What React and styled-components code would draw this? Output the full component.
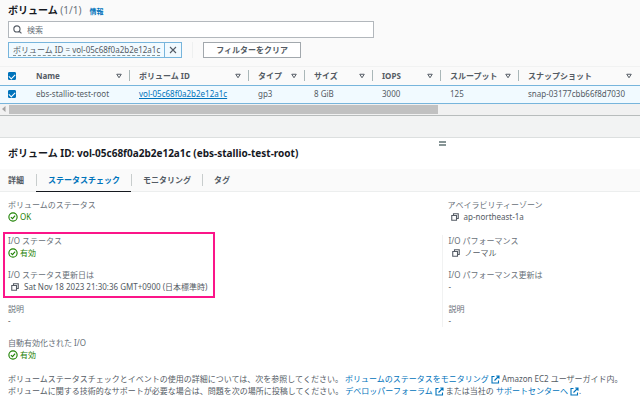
import { useState } from "react";
import styled, { createGlobalStyle } from "styled-components";

const columns = [
    { title: 'Name', width: 103 },
    { title: 'ボリューム ID', width: 119 },
    { title: 'タイプ', width: 56 },
    { title: 'サイズ', width: 68 },
    { title: 'IOPS', width: 68 },
    { title: 'スループット', width: 78 },
    { title: 'スナップショット' },
]

const tabs = ['詳細', 'ステータスチェック', 'モニタリング', 'タグ']

const CheckIcon = () => (
    <Icon $size={10} viewBox="0 0 16 16">
        <circle cx="8" cy="8" r="6.6" fill="none" stroke="#1d8102" strokeWidth="1.8" />
        <path d="M4.6 8.2 7.2 10.6 11.4 5.8" fill="none" stroke="#1d8102" strokeWidth="1.8" />
    </Icon>
)

const CopyIcon = () => (
    <Icon $size={8} viewBox="0 0 16 16">
        <path d="M1.5 5h9.5v9.5H1.5zM5 5V1.5h9.5V11H11" fill="none" stroke="#545b64" strokeWidth="2.2" />
    </Icon>
)

const ExternalIcon = () => (
    <Icon $size={9} viewBox="0 0 18 18">
        <path d="M7 3H2v13h13v-5M10.5 2H16v5.5M16 2 7 11" fill="none" stroke="#0073bb" strokeWidth="2.2" />
    </Icon>
)

const SortIcon = () => (
    <Icon $size={6} viewBox="0 0 12 12">
        <path d="M1.5 2.5h9L6 9.5z" fill="none" stroke="#545b64" strokeWidth="2" />
    </Icon>
)

const Status = ({ label, children }) => (
    <Item>
        <dt>{label}</dt>
        <Good><CheckIcon />{children}</Good>
    </Item>
)

const Copyable = ({ label, children }) => (
    <Item>
        <dt>{label}</dt>
        <Copy>
            <IconButton type="button" aria-label="コピー"><CopyIcon /></IconButton>
            {children}
        </Copy>
    </Item>
)

const Plain = ({ label }) => (
    <Item>
        <dt>{label}</dt>
        <dd>-</dd>
    </Item>
)

const App = () => {
    const [active, setActive] = useState(1)
    const [checked, setChecked] = useState(true)
    const toggle = () => setChecked(!checked)

    return (
        <Page>
            <GlobalStyle />

            <ListHeader>
                <Title>ボリューム <Counter>(1/1)</Counter><Info href="#info">情報</Info></Title>
                <SearchBox>
                    <Icon $size={9} viewBox="0 0 16 16">
                        <path d="M11 11l4 4M7 1.5a5.5 5.5 0 1 1 0 11 5.5 5.5 0 0 1 0-11z" fill="none" stroke="#545b64" strokeWidth="2" />
                    </Icon>
                    <SearchInput type="text" placeholder="検索" aria-label="検索" />
                </SearchBox>
                <Filters>
                    <Token>
                        <TokenText type="button"><span>ボリューム ID = vol-05c68f0a2b2e12a1c</span></TokenText>
                        <TokenClose type="button" aria-label="削除">
                            <Icon $size={8} viewBox="0 0 16 16">
                                <path d="M2 2l12 12M14 2 2 14" stroke="#545b64" strokeWidth="2.2" />
                            </Icon>
                        </TokenClose>
                    </Token>
                    <Divider />
                    <ClearButton type="button">フィルターをクリア</ClearButton>
                </Filters>
            </ListHeader>

            <Table>
                <colgroup>
                    <Col $w={27} />
                    {columns.map((c) => <Col key={c.title} $w={c.width} />)}
                </colgroup>
                <thead>
                    <tr>
                        <CheckHead><Checkbox type="checkbox" aria-label="すべて選択" checked={checked} onChange={toggle} /></CheckHead>
                        {columns.map((c, i) => (
                            <Th key={c.title}>
                                <HeadCell type="button" $last={i === columns.length - 1}>{c.title}<SortIcon /></HeadCell>
                            </Th>
                        ))}
                    </tr>
                </thead>
                <tbody>
                    <Row>
                        <CheckCell><Checkbox type="checkbox" aria-label="ebs-stallio-test-root" checked={checked} onChange={toggle} /></CheckCell>
                        <Td>ebs-stallio-test-root</Td>
                        <Td><VolumeLink href="#volume">vol-05c68f0a2b2e12a1c</VolumeLink></Td>
                        <Td>gp3</Td>
                        <Td>8 GiB</Td>
                        <Td>3000</Td>
                        <Td>125</Td>
                        <Td>snap-03177cbb66f8d7030</Td>
                    </Row>
                </tbody>
            </Table>
            <Scrollbar>
                <Icon $size={8} viewBox="0 0 8 8"><path d="M5.5 1v6L2 4z" fill="#a3a3a3" /></Icon>
                <Thumb />
            </Scrollbar>
            <Gutter />

            <Panel>
                <Resize><Handle type="button" aria-label="サイズ変更" /></Resize>
                <PanelTitle>ボリューム ID: vol-05c68f0a2b2e12a1c (ebs-stallio-test-root)</PanelTitle>
                <Tabs role="tablist">
                    {tabs.map((t, i) => (
                        <Tab key={t} type="button" role="tab" aria-selected={i === active} $active={i === active} onClick={() => setActive(i)}>
                            <span>{t}</span>
                        </Tab>
                    ))}
                </Tabs>

                <Body>
                    <Columns $gap={12}>
                        <Column><Status label="ボリュームのステータス">OK</Status></Column>
                        <Column $right><Copyable label="アベイラビリティーゾーン">ap-northeast-1a</Copyable></Column>
                    </Columns>
                    <Columns $gap={10}>
                        <Column>
                            <Marked>
                                <Status label="I/O ステータス">有効</Status>
                                <Copyable label="I/O ステータス更新日は">Sat Nov 18 2023 21:30:36 GMT+0900 (日本標準時)</Copyable>
                            </Marked>
                            <Plain label="説明" />
                        </Column>
                        <Column $right $line>
                            <Copyable label="I/O パフォーマンス">ノーマル</Copyable>
                            <Plain label="I/O パフォーマンス更新は" />
                            <Plain label="説明" />
                        </Column>
                    </Columns>
                    <Column><Status label="自動有効化された I/O">有効</Status></Column>
                    <Notes>
                        <p>ボリュームステータスチェックとイベントの使用の詳細については、次を参照してください。 <Link href="#monitor">ボリュームのステータスをモニタリング <ExternalIcon /></Link> Amazon EC2 ユーザーガイド内。</p>
                        <p>ボリュームに関する技術的なサポートが必要な場合は、問題を次の場所に投稿してください。 <Link href="#forum">デベロッパーフォーラム <ExternalIcon /></Link> または当社の <Link href="#support">サポートセンターへ <ExternalIcon /></Link>.</p>
                    </Notes>
                </Body>
            </Panel>
        </Page>
    );
};

export default App;

const GlobalStyle = createGlobalStyle`
  * { box-sizing: border-box; }
  body {
    margin: 0;
    background: #fff;
    color: #545b64;
    font: 8px/12px "Noto Sans", "Noto Sans CJK JP", sans-serif;
  }
  h1, h2, p, dl, dd { margin: 0; }
  button, input { font: inherit; color: inherit; }
  button { padding: 0; border: 0; background: none; }
`;

const Page = styled.main`
  overflow: hidden;
`;

const Icon = styled.svg`
  flex: none;
  width: ${(p) => p.$size}px;
  height: ${(p) => p.$size}px;
  vertical-align: middle;
`;

const ListHeader = styled.header`
  padding: 2px 8px 8px;
  background: #fafafa;
  border-bottom: 1px solid #f1f2f2;
`;

const Title = styled.h1`
  font-size: 10px;
  line-height: 16px;
  color: #16191f;
`;

const Counter = styled.span`
  font-weight: 400;
  color: #687078;
`;

const Info = styled.a`
  margin-left: 8px;
  font-size: 7px;
  line-height: 12px;
  color: #0073bb;
  text-decoration: none;
`;

const SearchBox = styled.div`
  display: flex;
  align-items: center;
  gap: 5px;
  max-width: 366px;
  height: 17px;
  margin-top: 3px;
  padding: 0 4px;
  border: 1px solid #b2b7bc;
  background: #fff;
`;

const SearchInput = styled.input`
  flex: 1;
  min-width: 0;
  padding: 0;
  border: 0;
  outline: 0;
  &::placeholder { color: #687078; }
`;

const Filters = styled.div`
  display: flex;
  margin-top: 4px;
`;

const Token = styled.div`
  display: flex;
  height: 16px;
  border: 1px solid #77b5dc;
  background: #f1faff;
`;

const TokenText = styled.button`
  padding: 0 4px;
  line-height: 10px;
  span { border-bottom: 1px dashed #879596; }
`;

const TokenClose = styled.button`
  display: grid;
  place-items: center;
  width: 17px;
  border-left: 1px solid #77b5dc;
`;

const Divider = styled.div`
  width: 1px;
  margin: 0 10px;
  background: #eef0f0;
`;

const ClearButton = styled.button`
  height: 16px;
  padding: 0 12px;
  border: 1px solid #a2a8ad;
  background: #fff;
  font-weight: 700;
  line-height: 12px;
`;

const Table = styled.table`
  width: 100%;
  table-layout: fixed;
  border-collapse: collapse;
  text-align: left;
`;

const Col = styled.col`
  width: ${(p) => (p.$w ? `${p.$w}px` : 'auto')};
`;

const Th = styled.th`
  height: 18px;
  padding: 0;
  background: #fafafa;
`;

const CheckHead = styled(Th)`
  padding-left: 8px;
`;

const HeadCell = styled.button`
  display: flex;
  align-items: center;
  justify-content: space-between;
  width: 100%;
  height: 11px;
  padding: 0 7px 0 9px;
  border-right: 1px solid ${(p) => (p.$last ? 'transparent' : '#aab7b8')};
  font-weight: 700;
  white-space: nowrap;
`;

const Row = styled.tr`
  background: #f1faff;
  border-top: 1px solid #77b5dc;
  border-bottom: 1px solid #77b5dc;
`;

const Td = styled.td`
  height: 18px;
  padding: 0 0 0 9px;
  white-space: nowrap;
`;

const CheckCell = styled(Td)`
  padding-left: 8px;
`;

const Checkbox = styled.input`
  display: block;
  appearance: none;
  width: 8px;
  height: 8px;
  margin: 0;
  border: 1px solid #0073bb;
  border-radius: 1px;
  background: #fff;
  &:checked { background: #0073bb; }
  &:checked::after {
    content: "";
    display: block;
    width: 3px;
    height: 5px;
    margin: 0 auto;
    border: solid #fff;
    border-width: 0 1px 1px 0;
    transform: rotate(45deg);
  }
`;

const VolumeLink = styled.a`
  color: #0073bb;
`;

const Scrollbar = styled.div`
  display: flex;
  align-items: center;
  height: 12px;
  padding: 1px 0;
  background: #f1f1f1;
  border-bottom: 1px solid #b8bcbc;
`;

const Thumb = styled.div`
  width: 67%;
  height: 100%;
  margin-left: 1px;
  background: #c1c1c1;
`;

const Gutter = styled.div`
  height: 22px;
  background: #f2f3f3;
  border-bottom: 1px solid #dcdfdf;
`;

const Panel = styled.section`
  background: #fff;
`;

const Resize = styled.div`
  display: flex;
  justify-content: center;
  height: 8px;
  padding: 3px 0 0 244px;
`;

const Handle = styled.button`
  width: 7px;
  height: 5px;
  border: solid #879596;
  border-width: 2px 0;
`;

const PanelTitle = styled.h2`
  padding: 0 8px 8px;
  font-size: 10px;
  line-height: 15px;
  color: #16191f;
`;

const Tabs = styled.div`
  display: flex;
  height: 23px;
  background: #fafafa;
  border-bottom: 1px solid #eceeee;
`;

const Tab = styled.button`
  height: 23px;
  border-bottom: 1px solid ${(p) => (p.$active ? '#16191f' : 'transparent')};
  color: ${(p) => (p.$active ? '#0073bb' : '#545b64')};
  font-weight: 700;
  span {
    display: block;
    padding: 0 11px;
    border-left: 1px solid #c8cdcd;
  }
  &:first-child span {
    padding: 0 12px 0 8px;
    border-left: 0;
  }
`;

const Body = styled.div`
  padding-top: 7px;
`;

const Columns = styled.div`
  display: grid;
  grid-template-columns: 69fr 31fr;
  margin-bottom: ${(p) => p.$gap}px;
`;

const Column = styled.dl`
  display: flex;
  flex-direction: column;
  gap: 10px;
  padding-left: ${(p) => (p.$right ? 6 : 8)}px;
  border-left: ${(p) => (p.$line ? '1px solid #f1f2f2' : '0')};
`;

const Item = styled.div`
  dt { color: #687078; }
`;

const Good = styled.dd`
  display: flex;
  align-items: center;
  gap: 2px;
  color: #1d8102;
`;

const Copy = styled.dd`
  display: flex;
  align-items: center;
  gap: 5px;
  padding-left: 3px;
`;

const IconButton = styled.button`
  display: flex;
`;

const Marked = styled.div`
  position: relative;
  display: flex;
  flex-direction: column;
  gap: 10px;
  align-self: flex-start;
  &::after {
    content: "";
    position: absolute;
    inset: -3px -8px -5px -5px;
    border: 2px solid #fb1589;
    pointer-events: none;
  }
`;

const Notes = styled.div`
  padding: 12px 8px;
`;

const Link = styled.a`
  color: #0073bb;
  text-decoration: none;
`;
